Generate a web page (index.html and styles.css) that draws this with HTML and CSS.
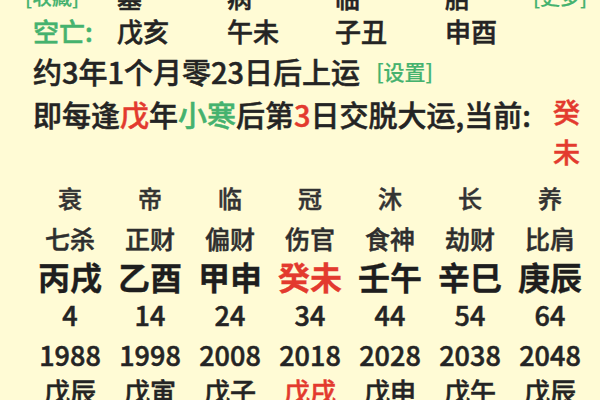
FILE: index.html
```html
<!DOCTYPE html>
<html lang="zh-CN">
<head>
<meta charset="utf-8">
<title>大运</title>
<link rel="stylesheet" href="styles.css">
</head>
<body>
<div class="page">
  <div class="row-a">
    <span class="green small">[收藏]</span>
    <span>墓</span>
    <span>病</span>
    <span>临</span>
    <span>胎</span>
    <span class="green small">[更多]</span>
  </div>
  <div class="row-b">
    <span class="green">空亡:</span>
    <span>戊亥</span>
    <span>午未</span>
    <span>子丑</span>
    <span>申酉</span>
  </div>
  <div class="row-c">
    <span>约3年1个月零23日后上运</span>
    <span class="green set">[设置]</span>
  </div>
  <div class="row-d">
    <span>即每逢<span class="red">戊</span>年<span class="green">小寒</span>后第<span class="red">3</span>日交脱大运,当前:</span>
    <span class="red current">癸未</span>
  </div>

  <div class="table">
    <div class="t-row r1">
      <span>衰</span><span>帝</span><span>临</span><span>冠</span><span>沐</span><span>长</span><span>养</span>
    </div>
    <div class="t-row r2">
      <span>七杀</span><span>正财</span><span>偏财</span><span>伤官</span><span>食神</span><span>劫财</span><span>比肩</span>
    </div>
    <div class="t-row r3">
      <span>丙戌</span><span>乙酉</span><span>甲申</span><span class="red">癸未</span><span>壬午</span><span>辛巳</span><span>庚辰</span>
    </div>
    <div class="t-row r4">
      <span>4</span><span>14</span><span>24</span><span>34</span><span>44</span><span>54</span><span>64</span>
    </div>
    <div class="t-row r5">
      <span>1988</span><span>1998</span><span>2008</span><span>2018</span><span>2028</span><span>2038</span><span>2048</span>
    </div>
    <div class="t-row r6">
      <span>戊辰</span><span>戊寅</span><span>戊子</span><span class="red">戊戌</span><span>戊申</span><span>戊午</span><span>戊辰</span>
    </div>
  </div>
</div>
</body>
</html>
```

FILE: styles.css
```css
html, body {
  margin: 0;
  padding: 0;
  background: #fffbd5;
}

.page {
  width: 600px;
  height: 400px;
  overflow: hidden;
  background: #fffbd5;
  color: #242424;
  font-family: "Noto Sans CJK SC", "Noto Sans", sans-serif;
  font-weight: 500;
  -webkit-text-stroke: 0.5px currentColor;
}

.green { color: #45b26e; }
.red { color: #e33a2e; }
.small { font-size: 20px; -webkit-text-stroke: 0.2px currentColor; }

.row-a {
  margin-top: -23px;
  height: 34px;
  line-height: 34px;
  font-size: 25px;
  display: grid;
  grid-template-columns: 92px 110px 108px 110px 88px auto;
  padding-left: 25px;
  padding-top: 3px;
  align-items: center;
}

.row-b {
  height: 34px;
  line-height: 34px;
  font-size: 26px;
  display: grid;
  grid-template-columns: 84px 110px 108px 110px auto;
  padding-left: 33px;
}

.row-c {
  height: 46px;
  line-height: 46px;
  font-size: 29px;
  padding-left: 33px;
  display: flex;
  align-items: center;
}

.set {
  font-size: 21px;
  margin-left: 16px;
  -webkit-text-stroke: 0.2px currentColor;
}

.row-d {
  line-height: 40px;
  font-size: 29px;
  padding-left: 33px;
  padding-right: 20px;
  display: flex;
  justify-content: space-between;
  align-items: flex-start;
}

.current {
  width: 1em;
  font-size: 27px;
  line-height: 40px;
  word-break: break-all;
  margin-top: -2px;
}

.table {
  margin-top: 6px;
  padding-left: 30px;
}

.t-row {
  display: grid;
  grid-template-columns: repeat(7, 80px);
  text-align: center;
}

.r1 { height: 40px; line-height: 40px; font-size: 24px; color: #333; }
.r2 { height: 40px; line-height: 40px; font-size: 25px; color: #2e2e2e; }
.r3 { height: 36px; line-height: 36px; font-size: 32px; font-weight: bold; color: #1e1e1e; -webkit-text-stroke: 0.3px currentColor; }
.r4 { height: 42px; line-height: 42px; font-size: 27px; }
.r5 { height: 37px; line-height: 37px; font-size: 27px; }
.r6 { height: 36px; line-height: 36px; font-size: 26px; }
```
